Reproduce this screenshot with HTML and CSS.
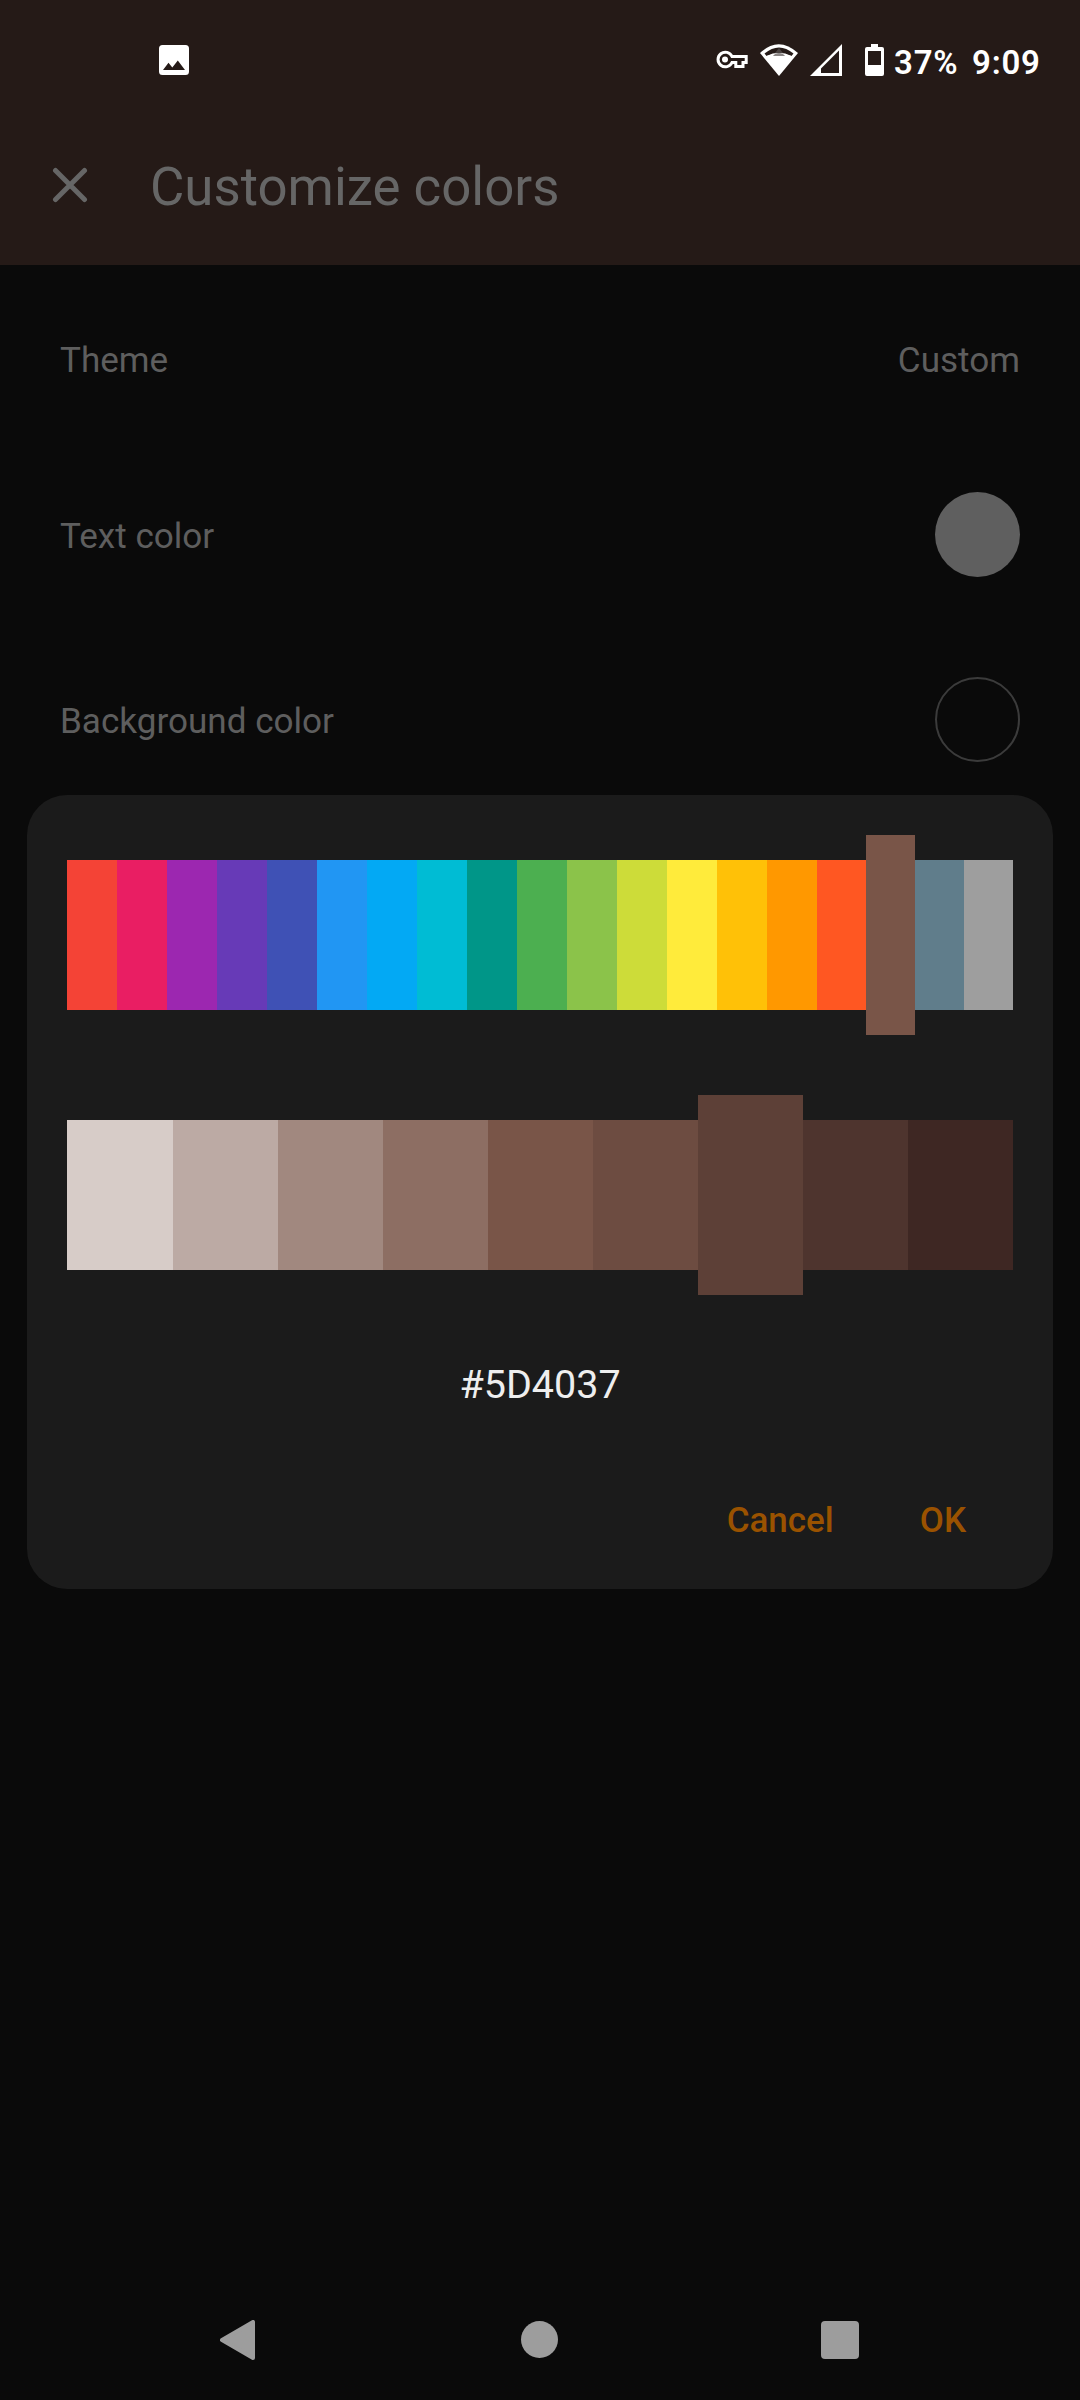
FILE: index.html
```html
<!DOCTYPE html>
<html lang="en">
<head>
<meta charset="utf-8">
<title>Customize colors</title>
<link rel="stylesheet" href="styles.css">
</head>
<body>
<div class="screen">
  <header class="header">
    <div class="status">
      <svg class="icon-image" width="30" height="30" viewBox="0 0 30 30"><path fill="#fff" fill-rule="evenodd" d="M3.5 0h23A3.5 3.5 0 0 1 30 3.5v23a3.5 3.5 0 0 1-3.500 3.500h-23A3.500 3.500 0 0 1 0 26.500v-23A3.500 3.500 0 0 1 3.500 0ZM4 25h22l-7.200-9.500-5.500 7-3.800-4.700Z"/></svg>
      <svg class="icon-key" width="32" height="20" viewBox="0 0 32 20"><path fill="none" stroke="#fff" stroke-width="3" d="M16 6.500A7.300 7.300 0 1 0 16 12.500H19.800V16.600H27V12.500H30.200V6.500Z"/><circle cx="9" cy="9.500" r="3" fill="#fff"/></svg>
      <svg class="icon-wifi" width="38" height="32" viewBox="0 0 38 32"><path fill="#fff" d="M0 9Q18.500-8.500 38 9L19 32Z"/><path fill="#251a17" d="M4.500 9.500Q19-2.500 33.500 9.500L31.500 12Q19 5.500 6.500 12Z"/><path fill="#fff" d="M6.500 12Q19 7 31.500 12L19 28Z"/><path fill="#8b8685" d="M13 12q2-3 6-3t6 3Z"/><path fill="#4a4240" d="M15 9 19 4l4 5Z"/></svg>
      <svg class="icon-signal" width="32" height="32" viewBox="0 0 32 32"><path fill="#fff" fill-rule="evenodd" d="M32 0V32H0ZM29 6.500 11 24.500V29H29Z"/></svg>
      <svg class="icon-battery" width="19" height="32" viewBox="0 0 19 32"><path fill="#fff" fill-rule="evenodd" d="M6 0h7v3h4a2 2 0 0 1 2 2v25a2 2 0 0 1-2 2H2a2 2 0 0 1-2-2V5a2 2 0 0 1 2-2h4ZM3 7v14h13V7Z"/></svg>
      <span class="percent">37%</span>
      <span class="clock">9:09</span>
    </div>
    <div class="toolbar">
      <svg width="36" height="36" viewBox="0 0 36 36"><path fill="none" stroke="#666" stroke-width="5" stroke-linecap="round" d="M3.500 3.500 32.500 32.500M32.500 3.500 3.500 32.500"/></svg>
      <h1 class="title">Customize colors</h1>
    </div>
  </header>
  <main class="settings">
    <div class="row row-theme"><span>Theme</span><span>Custom</span></div>
    <div class="row"><span class="label">Text color</span><i class="swatch swatch-text"></i></div>
    <div class="row"><span class="label">Background color</span><i class="swatch swatch-bg"></i></div>
  </main>
  <nav class="nav">
    <svg width="36" height="40" viewBox="0 0 36 40"><path fill="#9d9d9d" stroke="#9d9d9d" stroke-width="4" stroke-linejoin="round" d="M2 20 33 2V38Z"/></svg>
    <svg width="38" height="38" viewBox="0 0 38 38"><circle cx="19.500" cy="18.500" r="18.500" fill="#9d9d9d"/></svg>
    <svg width="38" height="38" viewBox="0 0 38 38"><rect width="38" height="38" rx="4" fill="#9d9d9d"/></svg>
  </nav>
  <section class="dialog">
    <div class="palette hues">
      <i class="red"></i><i class="pink"></i><i class="purple"></i><i class="deep-purple"></i><i class="indigo"></i><i class="blue"></i><i class="light-blue"></i><i class="cyan"></i><i class="teal"></i><i class="green"></i><i class="light-green"></i><i class="lime"></i><i class="yellow"></i><i class="amber"></i><i class="orange"></i><i class="deep-orange"></i><i class="brown selected"></i><i class="blue-grey"></i><i class="grey"></i>
    </div>
    <div class="palette shades">
      <i class="brown-100"></i><i class="brown-200"></i><i class="brown-300"></i><i class="brown-400"></i><i class="brown"></i><i class="brown-600"></i><i class="brown-700 selected"></i><i class="brown-800"></i><i class="brown-900"></i>
    </div>
    <div class="hex">#5D4037</div>
    <div class="actions"><span>Cancel</span><span>OK</span></div>
  </section>
</div>
</body>
</html>
```
FILE: styles.css
```css
* { box-sizing: border-box; }
body { margin: 0; background: #0a0a0a; font-family: Roboto, sans-serif; }
svg { display: block; flex: none; }
.screen { position: relative; display: flex; flex-direction: column; width: 1080px; height: 2400px; }

.header { height: 265px; background: #251a17; }
.status { display: flex; height: 120px; padding: 0 38px 0 158.5px; align-items: center; color: #fff; font-size: 33px; font-weight: 600; line-height: 40px; }
.icon-key { margin-left: auto; }
.icon-wifi { margin-left: 12px; }
.icon-signal { margin-left: 12px; }
.icon-battery { margin-left: 23px; }
.percent { width: 66px; margin: 6px 0 0 10px; letter-spacing: 0.8px; white-space: nowrap; }
.clock { width: 70px; margin: 6px 0 0 12px; letter-spacing: 0.8px; white-space: nowrap; }
.toolbar { display: flex; align-items: center; gap: 62px; height: 130px; padding-left: 52px; }
.title { margin: 4px 0 0; color: #666; font-size: 52.8px; font-weight: 400; line-height: 64px; }

.settings { flex: 1; color: #5e5e5e; font-size: 35.1px; line-height: 42px; }
.row { display: flex; align-items: center; justify-content: space-between; height: 185px; padding: 0 60px; }
.row-theme { height: 177px; padding-top: 13px; }
.label { padding-top: 3px; }
.swatch { width: 85px; height: 85px; border-radius: 50%; }
.swatch-text { background: #5f5f5f; }
.swatch-bg { border: 2px solid #3b3b3b; }

.nav { display: flex; justify-content: space-between; align-items: center; height: 120px; padding: 0 221px 0 220px; }

.dialog { position: absolute; left: 27px; top: 795px; width: 1026px; height: 794px; padding: 40px; border-radius: 40px; background: #1b1b1b; }
.palette { display: grid; height: 200px; align-items: center; }
.palette i { height: 150px; }
.palette .selected { height: 200px; }
.hues { grid-template-columns: repeat(15, 50px) repeat(4, 49px); }
.shades { grid-template-columns: 106px repeat(8, 105px); margin-top: 60px; }
.red { background: #f44336; }
.pink { background: #e91e63; }
.purple { background: #9c27b0; }
.deep-purple { background: #673ab7; }
.indigo { background: #3f51b5; }
.blue { background: #2196f3; }
.light-blue { background: #03a9f4; }
.cyan { background: #00bcd4; }
.teal { background: #009688; }
.green { background: #4caf50; }
.light-green { background: #8bc34a; }
.lime { background: #cddc39; }
.yellow { background: #ffeb3b; }
.amber { background: #ffc107; }
.orange { background: #ff9800; }
.deep-orange { background: #ff5722; }
.brown { background: #795548; }
.blue-grey { background: #607d8b; }
.grey { background: #9e9e9e; }
.brown-100 { background: #d7ccc8; }
.brown-200 { background: #bcaaa4; }
.brown-300 { background: #a1887f; }
.brown-400 { background: #8d6e63; }
.brown-600 { background: #6d4c41; }
.brown-700 { background: #5d4037; }
.brown-800 { background: #4e342e; }
.brown-900 { background: #3e2723; }
.hex { margin-top: 66px; color: #eee; font-size: 39.5px; line-height: 48px; text-align: center; }
.actions { display: flex; justify-content: flex-end; gap: 86px; margin-top: 91px; padding-right: 47px; color: #9a5200; font-size: 35px; font-weight: 500; line-height: 42px; }
```
